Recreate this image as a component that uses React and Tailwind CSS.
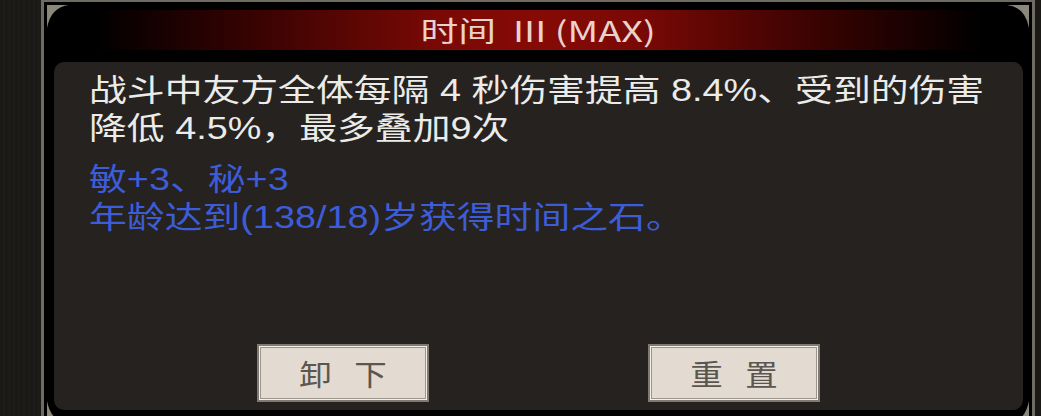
import React from "react";

const font = { fontFamily: '"Noto Sans CJK SC", "Noto Sans", sans-serif' };
const bodyFont = { fontFamily: '"Liberation Sans", "Noto Sans CJK SC", sans-serif' };

const Corner = ({ className }) => (
  <svg className={className} width="22" height="23" viewBox="0 0 22 23">
    <path d="M0 0 H22 Q4 2 0 23 Z" fill="#8a887a" />
  </svg>
);

const GameButton = ({ chars }) => (
  <button className="w-[172px] h-[58px] bg-[#e3dbd1] border-2 border-[#7f7a72] shadow-[inset_0_0_0_1px_#f4efe8,inset_0_0_0_2px_#9a948b] flex items-center justify-center gap-[25px] text-[#5b5650] text-[29px] leading-none">
    {chars.map((c) => (
      <span key={c} className="inline-block scale-x-[1.12]">{c}</span>
    ))}
  </button>
);

export default function App() {
  return (
    <div style={font} className="w-[1041px] h-[416px] overflow-hidden bg-[#1c1a17] flex">
      <div className="w-[41px] shrink-0 bg-[repeating-linear-gradient(90deg,#1b1916_0px,#1b1916_3px,#1e1c19_3px,#1e1c19_5px)]" />
      <div className="relative w-[994px] shrink-0 bg-black border-l-[3px] border-r-[3px] border-t-[2px] border-[#6d6b62] flex flex-col">
        <Corner className="absolute left-[3px] top-[3px]" />
        <Corner className="absolute right-[3px] top-[3px] -scale-x-100" />
        <Corner className="absolute left-[3px] -bottom-[8px] -scale-y-100" />
        <Corner className="absolute right-[3px] -bottom-[8px] -scale-100" />

        <div className="mt-[8px] h-[40px] flex items-center justify-center bg-[linear-gradient(to_right,#000_5%,#3a0302_22%,#7a0905_40%,#860a06_50%,#7a0905_60%,#3a0302_78%,#000_95%)]">
          <span className="inline-block scale-x-[1.35] text-[28px] leading-none text-[#ead2cc] whitespace-pre">
            时间  III (MAX)
          </span>
        </div>

        <div className="mt-[12px] ml-[10px] mr-[9px] h-[348px] rounded-[10px] bg-[#25221f] pl-[35px] pt-[10px] pb-[8px] flex flex-col">
          <div style={bodyFont} className="text-[31px] leading-[38px] text-[#ebebe9] whitespace-nowrap">
            <div className="origin-left scale-x-[1.22]">战斗中友方全体每隔 4 秒伤害提高 8.4%、受到的伤害</div>
            <div className="origin-left scale-x-[1.22]">降低 4.5%，最多叠加9次</div>
          </div>
          <div style={bodyFont} className="mt-[13px] text-[31px] leading-[38px] text-[#3d5cd8] whitespace-nowrap">
            <div className="origin-left scale-x-[1.22]">敏+3、秘+3</div>
            <div className="origin-left scale-x-[1.22]">年龄达到(138/18)岁获得时间之石。</div>
          </div>
          <div className="mt-auto -ml-[35px] flex justify-center gap-[219px]">
            <GameButton chars={["卸", "下"]} />
            <GameButton chars={["重", "置"]} />
          </div>
        </div>
      </div>
      <div className="flex-1 bg-[#1b1916]" />
    </div>
  );
}
